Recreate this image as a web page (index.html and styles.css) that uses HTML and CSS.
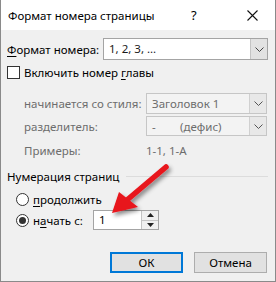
FILE: index.html
```html
<!DOCTYPE html>
<html lang="ru">
<head>
    <meta charset="UTF-8">
    <title>Формат номера страницы</title>
    <link rel="stylesheet" href="styles.css">
</head>
<body>
    <div class="dialog">
        <div class="titlebar">
            <span class="title">Формат номера страницы</span>
            <span class="help">?</span>
            <svg class="close" width="11" height="11" viewBox="0 0 11 11">
                <path d="M0.5 0.5 L10.5 10.5 M10.5 0.5 L0.5 10.5" stroke="#111" stroke-width="1.1" fill="none"/>
            </svg>
        </div>

        <div class="content">
            <div class="row format-row">
                <span class="label"><u>Ф</u>ормат номера:</span>
                <div class="combo wide">
                    <span class="combo-text">1, 2, 3, ...</span>
                    <span class="combo-btn"><svg width="9" height="5" viewBox="0 0 9 5"><path d="M0.5 0.5 L4.5 4.5 L8.5 0.5" stroke="#444" fill="none"/></svg></span>
                </div>
            </div>

            <div class="row check-row">
                <span class="checkbox"></span>
                <span class="label">Включить номер <u>г</u>лавы</span>
            </div>

            <div class="row sub-row first">
                <span class="label muted">начинается со стиля:</span>
                <div class="combo disabled">
                    <span class="combo-text">Заголовок 1</span>
                    <span class="combo-btn"><svg width="9" height="5" viewBox="0 0 9 5"><path d="M0.5 0.5 L4.5 4.5 L8.5 0.5" stroke="#555" fill="none"/></svg></span>
                </div>
            </div>
            <div class="row sub-row second">
                <span class="label muted">разделитель:</span>
                <div class="combo disabled">
                    <span class="combo-text"><span class="dash">-</span>(дефис)</span>
                    <span class="combo-btn"><svg width="9" height="5" viewBox="0 0 9 5"><path d="M0.5 0.5 L4.5 4.5 L8.5 0.5" stroke="#555" fill="none"/></svg></span>
                </div>
            </div>
            <div class="row sub-row examples">
                <span class="label muted">Примеры:</span>
                <span class="example muted">1-1, 1-А</span>
            </div>

            <div class="row group-row">
                <span class="label">Нумерация страниц</span>
                <span class="group-line"></span>
            </div>

            <div class="row radio-row first">
                <span class="radio"></span>
                <span class="label"><u>п</u>родолжить</span>
            </div>
            <div class="row radio-row second">
                <span class="radio checked"></span>
                <span class="label start-label">н<u>а</u>чать с:</span>
                <div class="spin">
                    <span class="spin-text">1</span>
                    <span class="spin-btns">
                        <span class="spin-up"><svg width="7" height="4" viewBox="0 0 7 4"><path d="M0 4 L3.5 0 L7 4 Z" fill="#222"/></svg></span>
                        <span class="spin-down"><svg width="7" height="4" viewBox="0 0 7 4"><path d="M0 0 L3.5 4 L7 0 Z" fill="#222"/></svg></span>
                    </span>
                </div>
            </div>

            <div class="row buttons">
                <button class="btn default">ОК</button>
                <button class="btn">Отмена</button>
            </div>
        </div>

        <!-- red pointer drawn on top of the dialog -->
        <svg class="arrow" width="276" height="282" viewBox="0 0 276 282">
            <defs>
                <filter id="shadow" x="-20%" y="-20%" width="150%" height="150%">
                    <feDropShadow dx="2" dy="3" stdDeviation="2" flood-color="#000" flood-opacity="0.45"/>
                </filter>
            </defs>
            <g filter="url(#shadow)">
                <path d="M166 167 L127 200" stroke="#e8141b" stroke-width="5.5" stroke-linecap="round"/>
                <path d="M112 213 L119 192 L138 207 Z" fill="#e8141b"/>
            </g>
        </svg>
    </div>
</body>
</html>
```

FILE: styles.css
```css
body {
    margin: 0;
    font-family: "Noto Sans", "Open Sans", sans-serif;
    font-size: 11.5px;
    color: #000;
    background: #fff;
}
.dialog {
    position: relative;
    width: 276px;
    height: 282px;
    box-sizing: border-box;
    border: 1px solid #8a8a8a;
    border-top: none;
    background: #f0f0f0;
    overflow: hidden;
}
.titlebar {
    height: 30px;
    background: #fff;
    display: flex;
    align-items: center;
    padding-left: 7px;
}
.title {
    flex: 1;
    font-size: 11.5px;
}
.help {
    width: 20px;
    margin-right: 36px;
    font-size: 13px;
}
.close {
    margin-right: 17px;
}
.content {
    padding: 0 7px 0 6px;
}
.row {
    display: flex;
    align-items: center;
}
.label {
    white-space: nowrap;
}
.muted {
    color: #6d6d6d;
}
u {
    text-decoration-thickness: 1px;
    text-underline-offset: 2px;
}

/* combo boxes */
.format-row {
    margin-top: 8px;
    height: 22px;
}
.format-row .label {
    width: 96px;
}
.combo {
    display: flex;
    height: 100%;
    box-sizing: border-box;
    border: 1px solid #a4a4a4;
    background: #fff;
}
.combo.wide {
    width: 165px;
}
.combo-text {
    flex: 1;
    padding-left: 5px;
    line-height: 19px;
    color: #1a1a1a;
}
.combo-btn {
    width: 16px;
    background: #e2e2e2;
    border-left: 1px solid #c4c4c4;
    display: flex;
    align-items: center;
    justify-content: center;
}
.combo.disabled {
    width: 121px;
    border-color: #c6c6c6;
    background: #f3f3f3;
}
.combo.disabled .combo-text {
    color: #6d6d6d;
}
.combo.disabled .combo-btn {
    background: #e8e8e8;
    border-left-color: #d0d0d0;
}
.dash {
    display: inline-block;
    width: 28px;
}

/* checkbox */
.check-row {
    margin-top: 6px;
    height: 13px;
}
.checkbox {
    width: 13px;
    height: 13px;
    box-sizing: border-box;
    border: 1px solid #333;
    background: #fff;
    margin-right: 4px;
}
.sub-row {
    padding-left: 17px;
}
.sub-row .label {
    width: 122px;
}
.sub-row.first {
    margin-top: 14px;
    height: 21px;
}
.sub-row.second {
    margin-top: 2px;
    height: 20px;
}
.sub-row.examples {
    margin-top: 7px;
    height: 14px;
}

/* page numbering group */
.group-row {
    margin-top: 12px;
    height: 14px;
}
.group-line {
    flex: 1;
    height: 1px;
    background: #dcdcdc;
    margin-left: 7px;
}
.radio-row {
    padding-left: 9px;
}
.radio-row.first {
    margin-top: 10px;
    height: 13px;
}
.radio-row.second {
    margin-top: 4px;
    height: 20px;
}
.radio {
    width: 13px;
    height: 13px;
    box-sizing: border-box;
    border: 1px solid #333;
    border-radius: 50%;
    background: #fff;
    margin-right: 4px;
    display: flex;
    align-items: center;
    justify-content: center;
}
.radio.checked::after {
    content: "";
    width: 7px;
    height: 7px;
    border-radius: 50%;
    background: #333;
}
.start-label {
    width: 60px;
}
.spin {
    display: flex;
    width: 66px;
    height: 20px;
    box-sizing: border-box;
    border: 1px solid #a4a4a4;
    background: #fff;
}
.spin-text {
    flex: 1;
    padding-left: 5px;
    line-height: 18px;
}
.spin-btns {
    width: 16px;
    display: flex;
    flex-direction: column;
    border-left: 1px solid #c4c4c4;
}
.spin-up,
.spin-down {
    flex: 1;
    background: #f0f0f0;
    display: flex;
    align-items: center;
    justify-content: center;
}
.spin-up {
    border-bottom: 1px solid #c4c4c4;
}

/* dialog buttons */
.buttons {
    margin-top: 22px;
    height: 21px;
    justify-content: flex-end;
    gap: 11px;
    padding-right: 1px;
}
.btn {
    width: 73px;
    height: 21px;
    box-sizing: border-box;
    border: 1px solid #adadad;
    background: #e1e1e1;
    font-family: inherit;
    font-size: 11.5px;
    padding: 0;
}
.btn.default {
    border: 2px solid #0078d7;
}
.arrow {
    position: absolute;
    left: -1px;
    top: 0;
    pointer-events: none;
}
```
